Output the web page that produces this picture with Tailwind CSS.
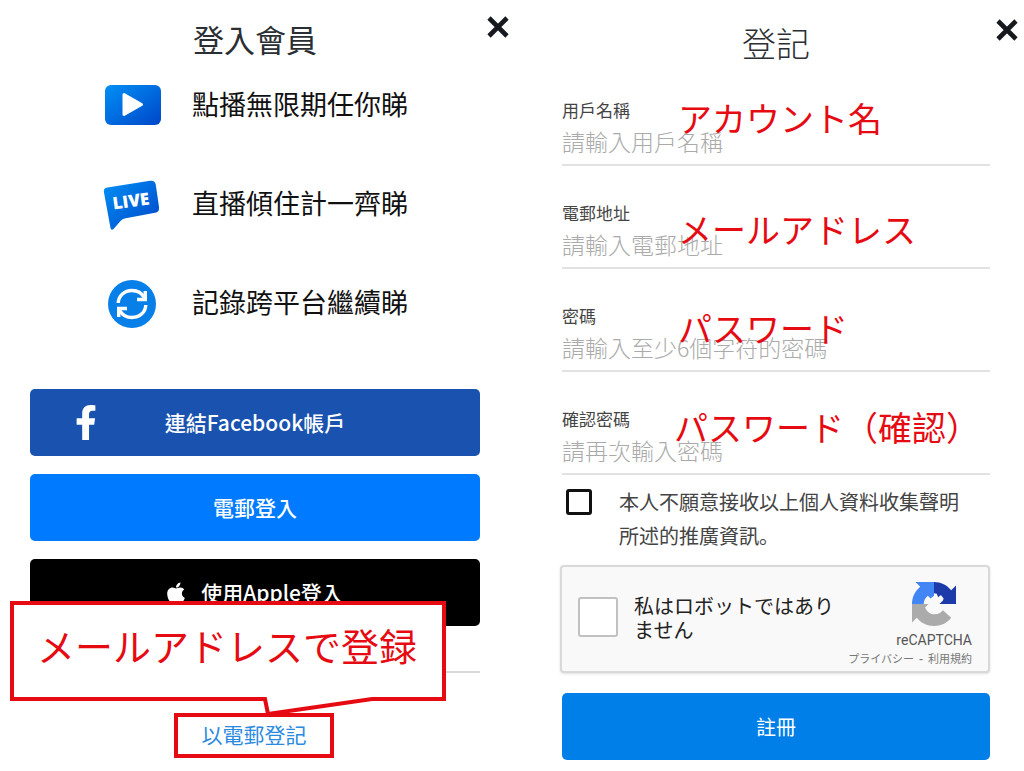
<!DOCTYPE html>
<html lang="zh-Hant">
<head>
  <meta charset="UTF-8">
  <meta name="viewport" content="width=device-width, initial-scale=1">
  <title>登入會員 / 登記</title>
  <script src="https://cdn.jsdelivr.net/npm/@tailwindcss/browser@4"></script>
</head>
<body class="bg-white text-[#2b2f33] font-['Noto_Sans_CJK_TC',sans-serif] min-h-screen">

  <main class="grid grid-cols-2">

    <!-- Login -->
    <section class="relative pl-[30px] pr-8 pt-[19px]">
      <button type="button" aria-label="關閉" class="absolute top-[15px] right-[2px] p-px">
        <svg class="size-[22px]" viewBox="0 0 22 22" fill="none" stroke="#16191d" stroke-width="4.6"><path d="M2 2l18 18M20 2L2 20"/></svg>
      </button>

      <h1 class="text-[31px] leading-10 text-center">登入會員</h1>

      <ul class="mt-[17px] flex flex-col gap-[43px] text-[27px] text-[#111]">
        <li class="flex items-center h-14 pl-[73px] gap-[31px]">
          <svg class="size-[58px] shrink-0" viewBox="0 0 58 58">
            <defs>
              <linearGradient id="blue" x1="0" y1="0" x2="1" y2="1">
                <stop offset="0" stop-color="#0090f5"/>
                <stop offset="1" stop-color="#0046c8"/>
              </linearGradient>
            </defs>
            <rect x="2" y="10" width="56" height="40" rx="6" fill="url(#blue)"/>
            <path d="M21 19.500L38.500 29.500 21 39.500z" fill="#fff" stroke="#fff" stroke-width="3" stroke-linejoin="round"/>
          </svg>
          <span>點播無限期任你睇</span>
        </li>
        <li class="flex items-center h-14 pl-[73px] gap-[31px]">
          <svg class="size-[58px] shrink-0" viewBox="0 0 58 58">
            <path d="M4.500 13.500L47 6.800q5-.8 5.800 4L56 33q.7 5-4 5.800L21.500 44.500q-2 .4-3.500 2L10.500 55q-2.300 2-3-1L.900 18q-.700-3.800 3.600-4.500z" fill="url(#blue)"/>
            <text x="28" y="33" text-anchor="middle" transform="rotate(-8 28 27)" fill="#fff" class="font-['Open_Sans',sans-serif] text-[17px] font-extrabold">LIVE</text>
          </svg>
          <span>直播傾住計一齊睇</span>
        </li>
        <li class="flex items-center h-14 pl-[73px] gap-[31px]">
          <svg class="size-[58px] shrink-0" viewBox="0 0 58 58">
            <circle cx="29" cy="31" r="24" fill="#067fe8"/>
            <g fill="none" stroke="#fff" stroke-width="3.400">
              <path d="M15.200 30C15.500 22.500 21.500 17.500 29 17.500c5.500 0 9.800 2.500 12.200 7"/>
              <path d="M42.800 32C42.500 39.500 36.500 44.500 29 44.500c-5.500 0-9.800-2.500-12.200-7"/>
              <path d="M42.300 18v8.500H34M15.700 44v-8.500H24"/>
            </g>
          </svg>
          <span>記錄跨平台繼續睇</span>
        </li>
      </ul>

      <div class="mt-[59px] flex flex-col gap-[18px] text-white text-[21px] font-medium">
        <button type="button" class="relative h-[67px] rounded-[5px] bg-[#1a52b0]">
          <svg class="absolute left-[45px] top-4 h-[35px] w-[22px]" viewBox="0 0 320 512" fill="#fff"><path d="M279.14 288l14.22-92.66h-88.91v-60.13c0-25.35 12.42-50.06 52.24-50.06h40.42V6.26S260.43 0 225.36 0c-73.22 0-121.08 44.38-121.08 124.72v70.62H22.89V288h81.39v224h100.17V288z"/></svg>
          連結Facebook帳戶
        </button>
        <button type="button" class="h-[67px] rounded-[5px] bg-[#007bff]">電郵登入</button>
        <button type="button" class="h-[67px] rounded-[5px] bg-black flex items-center justify-center gap-4">
          <svg class="h-6 w-[18px]" viewBox="0 0 384 512" fill="#fff"><path d="M318.7 268.7c-.2-36.7 16.4-64.4 50-84.8-18.8-26.9-47.2-41.7-84.7-44.6-35.5-2.8-74.3 20.7-88.5 20.7-15 0-49.4-19.7-76.4-19.7C63.3 141.2 4 184.8 4 273.5q0 39.3 14.4 81.2c12.8 36.7 59 126.7 107.2 125.2 25.2-.6 43-17.9 75.8-17.9 31.8 0 48.3 17.9 76.4 17.9 48.6-.7 90.4-82.5 102.6-119.3-65.2-30.7-61.7-90-61.7-91.9zm-56.6-164.2c27.3-32.4 24.8-61.9 24-72.5-24.1 1.4-52 16.4-67.9 34.9-17.5 19.8-27.8 44.3-25.6 71.9 26.1 2 49.9-11.4 69.5-34.3z"/></svg>
          使用Apple登入
        </button>
      </div>

      <hr class="mt-[45px] border-t-2 border-[#d9d9d9]">

      <div class="mt-10 pr-[2px] flex justify-center">
        <a href="#" class="w-40 h-[45px] pb-[2px] border-4 border-[#e60b12] flex items-center justify-center text-[21px] text-[#2a8ae0]">以電郵登記</a>
      </div>

      <!-- Callout over the buttons -->
      <div class="absolute left-[10px] top-[601px] w-[436px] h-[116px]">
        <svg class="absolute inset-0 size-full" viewBox="0 0 436 116" fill="#fff" stroke="#e60b12" stroke-width="4"><path d="M2 2h432v96h-72L258 113l-3-15H2z"/></svg>
        <p class="relative h-[86px] pr-[2px] flex items-center justify-center text-[38px] text-[#e60b12] font-['Noto_Sans_CJK_JP',sans-serif]">メールアドレスで登録</p>
      </div>
    </section>

    <!-- Register -->
    <section class="relative pl-[50px] pr-[34px] pt-[18px]">
      <button type="button" aria-label="關閉" class="absolute top-[18px] right-[5px] p-px">
        <svg class="size-[22px]" viewBox="0 0 22 22" fill="none" stroke="#16191d" stroke-width="4.6"><path d="M2 2l18 18M20 2L2 20"/></svg>
      </button>

      <h1 class="text-[34px] leading-[50px] font-light text-center">登記</h1>

      <form>
        <div class="mt-[30px] flex flex-col gap-[35px]">
          <div class="relative flex flex-col border-b-2 border-[#e2e2e2]">
            <label for="username" class="text-[17px] leading-6 text-[#444]">用戶名稱</label>
            <input id="username" type="text" placeholder="請輸入用戶名稱" class="h-[42px] pb-1 text-[23px] font-light outline-none placeholder:text-[#aaa]">
            <span class="absolute left-[116px] top-0 text-[34px] leading-10 text-[#e60b12] font-['Noto_Sans_CJK_JP',sans-serif]">アカウント名</span>
          </div>
          <div class="relative flex flex-col border-b-2 border-[#e2e2e2]">
            <label for="email" class="text-[17px] leading-6 text-[#444]">電郵地址</label>
            <input id="email" type="email" placeholder="請輸入電郵地址" class="h-[42px] pb-1 text-[23px] font-light outline-none placeholder:text-[#aaa]">
            <span class="absolute left-[116px] top-2 text-[34px] leading-10 text-[#e60b12] font-['Noto_Sans_CJK_JP',sans-serif]">メールアドレス</span>
          </div>
          <div class="relative flex flex-col border-b-2 border-[#e2e2e2]">
            <label for="password" class="text-[17px] leading-6 text-[#444]">密碼</label>
            <input id="password" type="password" placeholder="請輸入至少6個字符的密碼" class="h-[42px] pb-1 text-[23px] font-light outline-none placeholder:text-[#aaa]">
            <span class="absolute left-[116px] top-1 text-[34px] leading-10 text-[#e60b12] font-['Noto_Sans_CJK_JP',sans-serif]">パスワード</span>
          </div>
          <div class="relative flex flex-col border-b-2 border-[#e2e2e2]">
            <label for="confirm" class="text-[17px] leading-6 text-[#444]">確認密碼</label>
            <input id="confirm" type="password" placeholder="請再次輸入密碼" class="h-[42px] pb-1 text-[23px] font-light outline-none placeholder:text-[#aaa]">
            <span class="absolute left-28 top-0 text-[34px] leading-10 whitespace-nowrap text-[#e60b12] font-['Noto_Sans_CJK_JP',sans-serif]">パスワード（確認）</span>
          </div>
        </div>

        <div class="mt-[10px] pl-1 pr-6 flex items-start gap-[27px]">
          <input id="optout" type="checkbox" class="appearance-none mt-1 size-[26px] shrink-0 border-3 border-[#111] rounded-[3px] bg-white">
          <label for="optout" lang="ja" class="text-xl leading-[34px] text-[#444] font-['Noto_Sans_CJK_JP',sans-serif]">本人不願意接收以上個人資料收集聲明所述的推廣資訊。</label>
        </div>

        <div class="mt-3 -ml-[2px] h-[108px] flex border-2 border-[#d9d9d9] rounded-[4px] bg-[#f9f9f9] px-4 font-['Noto_Sans_CJK_JP',sans-serif] shadow-sm">
          <input id="robot" type="checkbox" class="appearance-none mt-[30px] size-10 shrink-0 border-2 border-[#c1c1c1] rounded-[3px] bg-white">
          <label for="robot" class="ml-4 mt-[27px] w-[206px] text-xl leading-6 text-[#222]">私はロボットではありません</label>
          <div class="ml-auto w-0 flex flex-col items-end text-[#555]">
            <svg class="mt-[15px] mr-4 size-11 shrink-0" viewBox="0 0 64 64">
              <path fill="#1C3AA9" d="M32 0c10 0 19 4.500 25 12l7-7v27H40l5-5 1-3-4-5-4 3-2-5-4-.5z"/>
              <path fill="#4285F4" d="M5 0h27v20l-5 4-4-4c-3.500 3-6 7-6 12H0C0 22 4.500 13 12 7z"/>
              <path fill="#ABABAB" d="M0 32h24l-5 5c2.500 6 7.500 10 14 10 5 0 9-2 12-6l12 11C51 60 42 64 32 64 22 64 13 59.500 7 52l-7 7z"/>
            </svg>
            <span class="mt-1 text-sm leading-5 font-['Roboto',sans-serif]">reCAPTCHA</span>
            <span class="flex gap-[5px] text-[11px] leading-4 whitespace-nowrap text-[#777]"><a href="#">プライバシー</a><b>-</b><a href="#">利用規約</a></span>
          </div>
        </div>

        <button type="submit" class="mt-5 w-full h-[67px] rounded-[5px] bg-[#007fe8] text-white text-xl">註冊</button>
      </form>
    </section>

  </main>

</body>
</html>
